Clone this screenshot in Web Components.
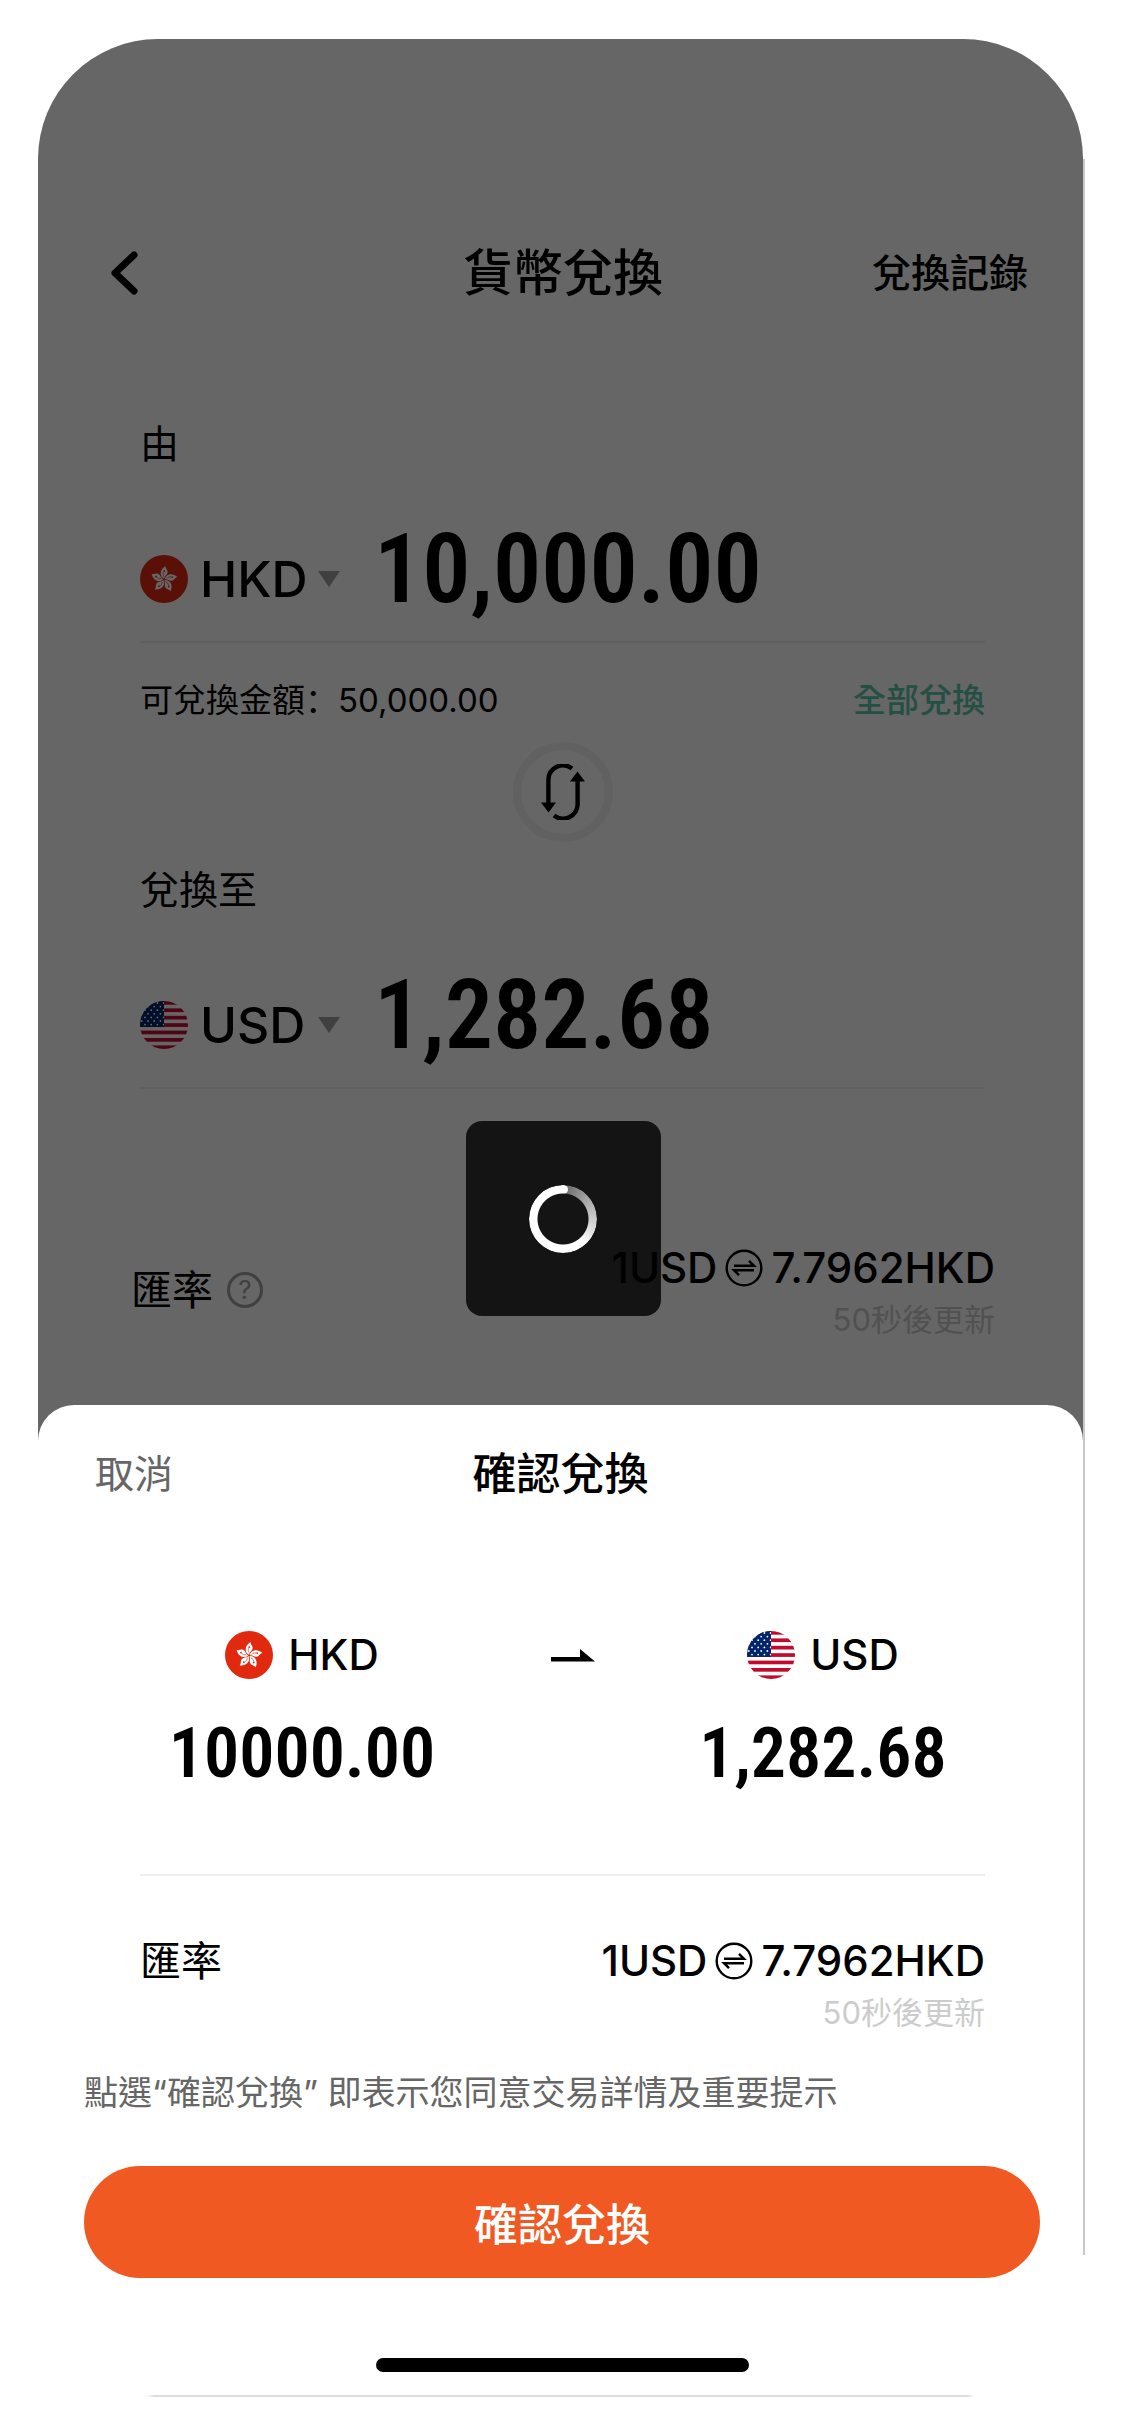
<!DOCTYPE html>
<html lang="zh-Hant">
<head>
<meta charset="utf-8">
<meta name="viewport" content="width=device-width, initial-scale=1">
<title>貨幣兌換</title>
<style>
  body {
    margin: 0;
    background: #fff;
    color: #000;
    font-family: Inter, "Noto Sans CJK SC", sans-serif;
    --num: "DIN Alternate", "Roboto Condensed", "Liberation Sans Narrow", Roboto, sans-serif;
  }
</style>
</head>
<body>
<exchange-app></exchange-app>

<script>
const define = (name, html, setup) => {
  const tpl = document.createElement('template');
  tpl.innerHTML = '<style>*{box-sizing:border-box}button,input,select{font:inherit;color:inherit;background:none;border:0;margin:0;padding:0;border-radius:0;outline:0}</style>' + html;
  customElements.define(name, class extends HTMLElement {
    static get observedAttributes() { return ['code', 'amount', 'label']; }
    constructor() {
      super();
      this.attachShadow({ mode: 'open' }).append(tpl.content.cloneNode(true));
    }
    connectedCallback() { if (setup) setup(this, this.shadowRoot); }
    attributeChangedCallback() { if (setup && this.isConnected) setup(this, this.shadowRoot); }
  });
};

/* Round country flag */
const stripes = [0, 2, 4, 6, 8, 10, 12]
  .map(i => `<rect y="${i * 3.7}" width="48" height="3.7" fill="#c20a2c"/>`).join('');
let stars = '';
for (let r = 0; r < 7; r++)
  for (let c = 0; c < 4; c++)
    stars += `<circle cx="${(r % 2 ? 1.8 : 5) + c * 6.2}" cy="${2 + r * 3.6}" r=".9" fill="#fff"/>`;
const petals = [0, 72, 144, 216, 288].map(a => `<g transform="rotate(${a + 3})">
  <path fill="#fff" d="M0 -.8C-4.6 -2.6 -5.4 -9.6 1 -13.6C.4 -11.4 3.4 -10 3.2 -7.2C3 -4.6 .4 -4 0 -.8Z"/>
  <path d="M-.2 -3C-1.4 -4.6 -1.4 -6 -.6 -7.4" fill="none" stroke="#e0290f" stroke-width=".6"/>
  <circle cx="-.2" cy="-8.4" r=".9" fill="#e0290f"/></g>`).join('');
const flags = {
  HKD: `<circle cx="24" cy="24" r="24" fill="#e0290f"/><g transform="translate(24 24.5)">${petals}</g>`,
  USD: `<clipPath id="c"><circle cx="24" cy="24" r="24"/></clipPath><g clip-path="url(#c)"><rect width="48" height="48" fill="#fff"/>${stripes}<rect width="24" height="25.9" fill="#00256b"/><svg width="24" height="25.9">${stars}</svg></g>`
};
define('country-flag', `<style>
  :host{display:block;flex:none;width:48px;height:48px}
  :host([dim]){filter:brightness(.4)}
  svg{display:block}
</style><div></div>`, (el, root) => {
  const art = flags[el.getAttribute('code')] || '';
  root.querySelector('div').innerHTML =
    `<svg width="48" height="48" viewBox="0 0 48 48" aria-hidden="true">${art}</svg>`;
});

/* Currency picker with its amount */
define('currency-field', `<style>
  :host{display:block}
  .label{display:block;font-size:39px;line-height:56px}
  .row{display:flex;align-items:flex-end;height:169px;padding-bottom:16px}
  .pick{display:flex;align-items:center;height:64px;flex:none;margin-bottom:14px}
  select{appearance:none;width:118px;margin-left:12px;font-size:50px;line-height:64px;height:64px;font-weight:500}
  .caret{display:block;width:22px;height:16px}
  input{flex:1;min-width:0;margin-left:34px;height:112px;font:600 96px/112px var(--num)}
  hr{margin:0;border:0;height:2px;background:#5f5f5f}
</style>
<label class="label" for="amount"></label>
<div class="row">
  <div class="pick">
    <country-flag dim></country-flag>
    <select aria-label="貨幣"><option></option></select>
    <svg class="caret" viewBox="0 0 22 16" aria-hidden="true"><path d="M0 0H22L11 16Z" fill="#404040"/></svg>
  </div>
  <input id="amount" type="text" inputmode="decimal">
</div>
<hr>`, (el, root) => {
  root.querySelector('label').textContent = el.getAttribute('label');
  root.querySelector('country-flag').setAttribute('code', el.getAttribute('code'));
  root.querySelector('option').textContent = el.getAttribute('code');
  root.querySelector('input').value = el.getAttribute('amount');
});

/* Exchange rate line */
define('rate-row', `<style>
  :host{display:flex;justify-content:space-between;align-items:flex-start}
  .name{display:flex;align-items:center;gap:14px;font-size:41px;line-height:52px;font-weight:400;padding-bottom:var(--name-pad,0)}
  .value{display:flex;flex-direction:column;align-items:flex-end}
  .rate{display:flex;align-items:center;gap:8px;font-size:42px;line-height:52px;font-weight:500}
  .note{font-size:31px;line-height:52px;font-weight:400;color:var(--note,#ccc)}
  svg{display:block}
</style>
<div class="name">匯率<slot></slot></div>
<div class="value">
  <div class="rate"><span>1USD</span>
    <svg width="38" height="38" viewBox="0 0 38 38" fill="none" stroke="#000" stroke-width="2.4" aria-hidden="true"><circle cx="19" cy="19" r="17.3"/><path d="M9 16.8H29L24 11.8M29 21.2H9L14 26.2"/></svg>
    <span>7.7962HKD</span></div>
  <div class="note">50秒後更新</div>
</div>`);

/* Busy indicator */
define('busy-toast', `<style>
  :host{display:grid;place-items:center;width:195px;height:195px;border-radius:16px;background:rgba(0,0,0,.8)}
  .ring{width:68px;height:68px;border-radius:50%;background:conic-gradient(#666,#aaa 15%,#fff 40%);
    -webkit-mask:radial-gradient(closest-side,transparent 25px,#000 26px);mask:radial-gradient(closest-side,transparent 25px,#000 26px)}
  .ring::before{content:"";display:block;width:9px;height:9px;margin:0 auto;border-radius:50%;background:#fff}
</style><div class="ring" role="status" aria-label="載入中"></div>`);

/* Exchange form screen, shaded behind the sheet */
define('exchange-screen', `<style>
  :host{display:block;position:relative;padding:199px 0 95px;background:#666;border-radius:120px 120px 0 0}
  header{display:grid;grid-template-columns:1fr auto 1fr;align-items:center;height:70px;padding:0 55px 0 60px}
  h1{margin:0;font-size:50px;line-height:70px;font-weight:500}
  .back{justify-self:start;padding:12px}
  .back svg{display:block}
  .log{justify-self:end;font-size:39px;line-height:56px;font-weight:500;color:#000;text-decoration:none}
  main{padding:108px 98px 0 102px}
  .balance{display:flex;justify-content:space-between;margin-top:32px;font-size:33px;line-height:50px}
  .balance button{color:#244f43;font-weight:500}
  .swap{display:grid;place-items:center;width:100px;height:100px;margin:17px auto 20px;border:8px solid #616161;border-radius:50%}
  .swap svg{display:block}
  rate-row{align-items:center;margin-top:153px;padding:0 88px 0 93px;--note:#515151;--name-pad:8px}
  .help{width:36px;height:36px;border:3px solid #404040;border-radius:50%;font-size:26px;line-height:30px;color:#404040;font-weight:400}
  busy-toast{position:absolute;left:50%;top:1082px;margin-left:-95px}
</style>
<header>
  <button class="back" aria-label="返回"><svg width="28" height="44" viewBox="0 0 28 44" fill="none" stroke="#000" stroke-width="7" stroke-linecap="round" stroke-linejoin="round"><path d="M24 4L5 22L24 40"/></svg></button>
  <h1>貨幣兌換</h1>
  <a class="log" href="#">兌換記錄</a>
</header>
<main>
  <currency-field label="由" code="HKD" amount="10,000.00"></currency-field>
  <div class="balance"><span lang="zh-CN">可兌換金額：50,000.00</span><button>全部兌換</button></div>
  <button class="swap" aria-label="互換"><svg width="48" height="56" viewBox="0 0 48 56" fill="none" stroke="#000" stroke-width="4.4"><path d="M33 4.500A14.600 14.600 0 0 0 9.400 15.500V42M15 51.500A14.600 14.600 0 0 0 38.600 40.500V14"/><path d="M2 38.500H17L9.500 48.500ZM31 17.500H46L38.500 7.500Z" fill="#000" stroke="none"/></svg></button>
  <currency-field label="兌換至" code="USD" amount="1,282.68"></currency-field>
</main>
<rate-row><button class="help" aria-label="匯率說明">?</button></rate-row>
<busy-toast></busy-toast>`);

/* One side of the exchange in the sheet */
define('exchange-side', `<style>
  :host{display:flex;flex-direction:column;align-items:center;gap:30px;width:256px}
  .code{display:flex;align-items:center;gap:15px;font-size:42px;line-height:64px;font-weight:500}
  .amount{font:600 70px/72px var(--num);white-space:nowrap}
</style>
<div class="code"><country-flag></country-flag><span></span></div>
<div class="amount"><slot></slot></div>`, (el, root) => {
  const code = el.getAttribute('code');
  root.querySelector('country-flag').setAttribute('code', code);
  root.querySelector('.code span').textContent = code;
});

/* Confirmation sheet */
define('confirm-sheet', `<style>
  :host{display:block;position:relative;margin-top:-36px;padding-top:35px;background:#fff;border-radius:36px 36px 0 0}
  header{display:grid;grid-template-columns:1fr auto 1fr;align-items:center;padding:0 57px}
  h2{margin:0;font-size:44px;line-height:68px;font-weight:500}
  .cancel{justify-self:start;font-size:39px;line-height:68px;color:#666}
  .pair{display:flex;justify-content:space-between;margin:115px 98px 0 102px;padding:0 34px 85px;border-bottom:2px solid #eee}
  .pair svg{display:block}
  rate-row{margin:59px 98px 0 102px}
  footer{padding:29px 43px 23px 46px}
  p{margin:0 0 48px;font-size:34px;line-height:50px;color:#666}
  .ok{display:block;width:100%;height:112px;border-radius:56px;background:#f05a22;color:#fff;font-size:44px;font-weight:500}
  .home{width:373px;height:14px;margin:80px auto 0;border-radius:7px;background:#000}
</style>
<header><button class="cancel">取消</button><h2>確認兌換</h2></header>
<div class="pair">
  <exchange-side code="HKD">10000.00</exchange-side>
  <svg width="64" height="64" viewBox="0 0 64 64" aria-hidden="true"><path d="M20 34H49V26L64 38.500H20Z"/></svg>
  <exchange-side code="USD">1,282.68</exchange-side>
</div>
<rate-row></rate-row>
<footer>
  <p>點選“確認兌換” 即表示您同意交易詳情及重要提示</p>
  <button class="ok">確認兌換</button>
  <div class="home"></div>
</footer>`);

/* Phone frame with its hairline edges */
define('exchange-app', `<style>
  :host{display:block;padding:39px 40px 40px 38px}
  .frame{padding:0 2px 2px 0;background:
    linear-gradient(#c8c8c8,#c8c8c8) right 0 top 120px/2px calc(100% - 262px) no-repeat,
    linear-gradient(90deg,transparent,#ddd 8px,#ddd calc(100% - 8px),transparent) left 108px bottom 0/calc(100% - 218px) 2px no-repeat}
</style>
<div class="frame"><exchange-screen></exchange-screen><confirm-sheet></confirm-sheet></div>`);
</script>
</body>
</html>
